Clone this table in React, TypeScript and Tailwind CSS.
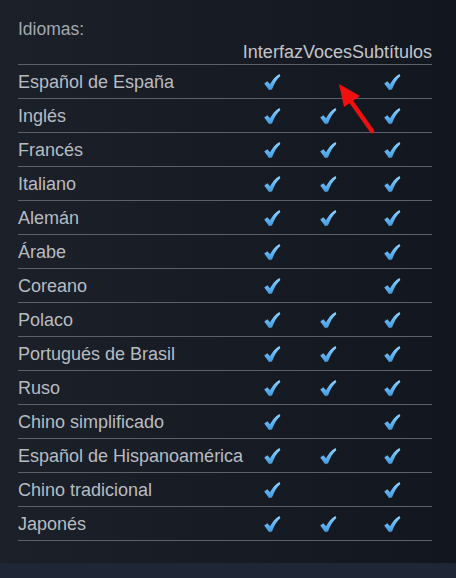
const rows: [string, boolean, boolean, boolean][] = [
  ["Español de España", true, false, true],
  ["Inglés", true, true, true],
  ["Francés", true, true, true],
  ["Italiano", true, true, true],
  ["Alemán", true, true, true],
  ["Árabe", true, false, true],
  ["Coreano", true, false, true],
  ["Polaco", true, true, true],
  ["Portugués de Brasil", true, true, true],
  ["Ruso", true, true, true],
  ["Chino simplificado", true, false, true],
  ["Español de Hispanoamérica", true, true, true],
  ["Chino tradicional", true, false, true],
  ["Japonés", true, true, true],
];

function Check() {
  return (
    <svg width="18" height="18" viewBox="0 0 18 18">
      <defs>
        <linearGradient id="ck" x1="0" y1="0" x2="0" y2="1">
          <stop offset="0" stopColor="#8fd4ff" />
          <stop offset="1" stopColor="#3f9ae0" />
        </linearGradient>
      </defs>
      <path
        d="M1.2 10.6 L4.4 8.2 L7 11.2 C9.4 6.8 12.4 3.2 16.4 0.9 L17.4 3 C13.6 6.4 11.2 10.6 9 16.6 L6 17 Z"
        fill="url(#ck)"
      />
    </svg>
  );
}

export default function App() {
  return (
    <div
      className="w-[456px] h-[578px] flex flex-col bg-[linear-gradient(90deg,#1b2029,#12161f)] text-[#b7bcc1]"
      style={{ fontFamily: "'Liberation Sans', Arial, sans-serif" }}
    >
      <div className="relative h-[563px] pl-[18px] pr-6 pt-[18px]">
        <div className="text-[17.5px] leading-[22px] text-[#a3a9b0]">Idiomas:</div>
        <div className="flex justify-end mt-px text-[18px] leading-[22px] text-[#c2c6ca]">
          <span>Interfaz</span>
          <span>Voces</span>
          <span>Subtítulos</span>
        </div>
        <div className="border-t border-[#5b616a] mt-px">
          {rows.map(([name, a, b, c]) => (
            <div
              key={name}
              className="h-[34px] flex items-center border-b border-[#5b616a] text-[18px] leading-[22px]"
            >
              <span className="flex-1">{name}</span>
              <span className="w-[18px] mr-[38px] flex justify-center">{a && <Check />}</span>
              <span className="w-[18px] mr-[46px] flex justify-center">{b && <Check />}</span>
              <span className="w-[18px] mr-[31px] flex justify-center">{c && <Check />}</span>
            </div>
          ))}
        </div>
        <svg className="absolute left-[330px] top-[79px]" width="50" height="60" viewBox="0 0 50 60">
          <line x1="42" y1="52" x2="20" y2="21" stroke="#f01010" strokeWidth="4.5" strokeLinecap="round" />
          <polygon points="9,5 30,17 14,28" fill="#f01010" />
        </svg>
      </div>
      <div className="flex-1 bg-[#1f2737]" />
    </div>
  );
}
